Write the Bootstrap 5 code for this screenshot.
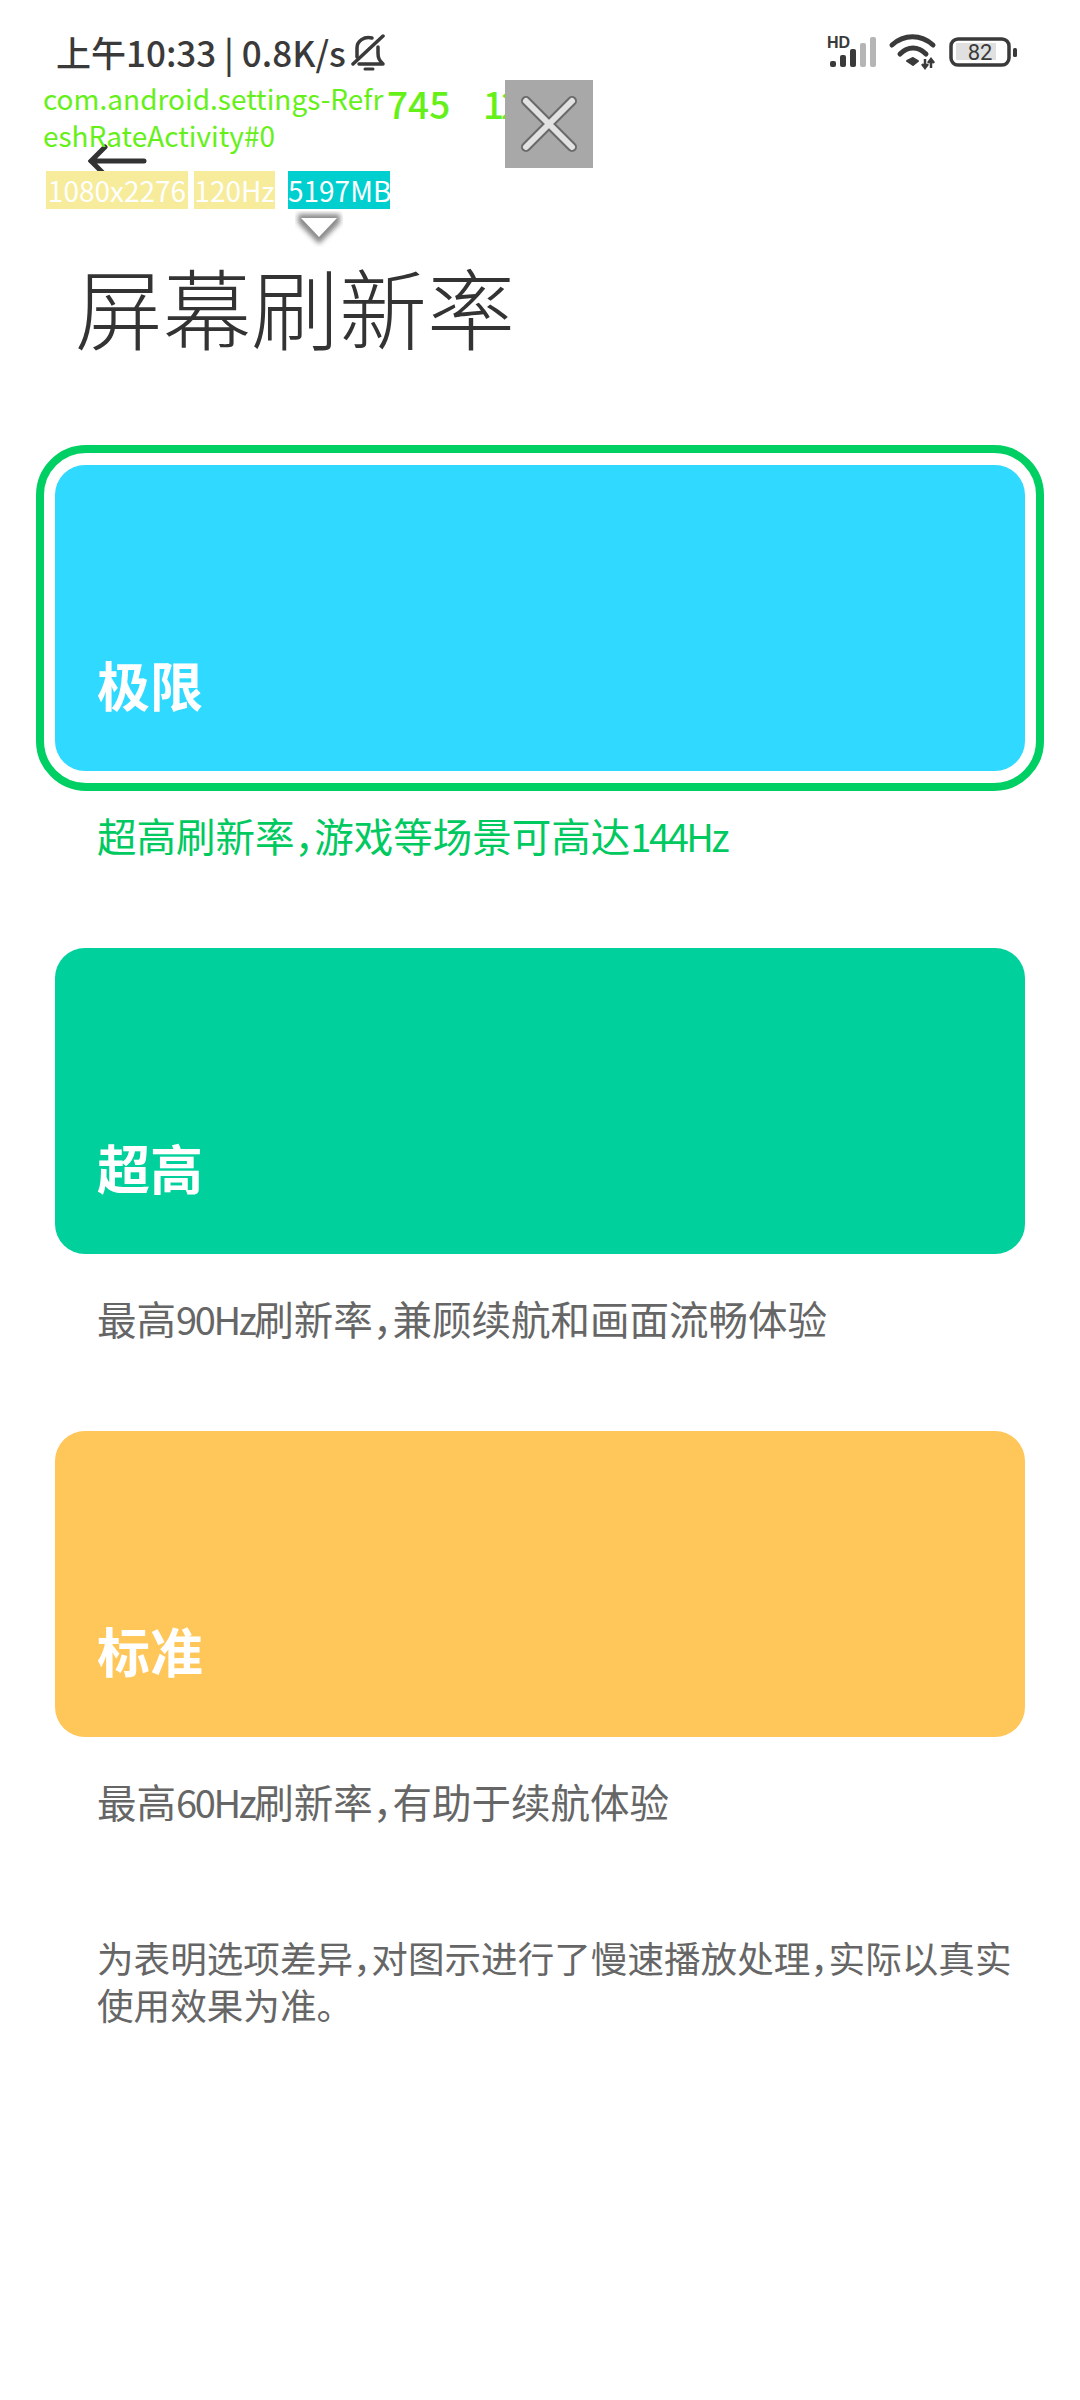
<!DOCTYPE html>
<html lang="zh-CN">
<head>
  <meta charset="UTF-8">
  <meta name="viewport" content="width=device-width, initial-scale=1.0">
  <title>屏幕刷新率</title>
  <link rel="stylesheet" href="https://cdn.jsdelivr.net/npm/bootstrap@5.3.0/dist/css/bootstrap.min.css">
  <style>
    body { width: 1080px; height: 2400px; background: #fff; font-family: "Noto Sans CJK SC", "Noto Sans", sans-serif; color: #333; position: relative; overflow: hidden; }
    .status-bar { height: 104px; padding: 26px 63px 0 56px; }
    .status-text { font-size: 35px; font-weight: 500; line-height: 52px; color: #3a3a3a; }
    .status-bell { margin: 8px 0 0 5px; }
    .status-icons { gap: 12px; height: 52px; }
    .status-icons svg { overflow: visible; }
    .back-row { height: 110px; padding: 3px 0 0 88px; }
    .page-title { font-size: 88px; font-weight: 300; line-height: 120px; margin: 31px 0 80px 75px; color: #333; }
    .rate-frame { margin: 0 36px; padding: 12px 11px; border: 8px solid transparent; border-radius: 50px; }
    .rate-frame-on { border-color: #00cf63; }
    .rate-tile { height: 306px; border-radius: 30px; padding: 0 42px 52px; color: #fff; font-size: 53px; font-weight: 700; line-height: 70px; }
    .tile-cyan { background: #2fd9ff; }
    .tile-green { background: #00d09c; }
    .tile-orange { background: #ffc65a; }
    .rate-desc { margin: 17px 0 0 97px; font-size: 39.5px; line-height: 54px; color: #666; height: 120px; white-space: nowrap; }
    .rate-desc-on { color: #00c95f; }
    .rate-note { margin: 40px 40px 0 97px; font-size: 36.6px; line-height: 47px; color: #666; }
    .narrow-comma { font-feature-settings: "halt"; }
    .tight-latin { font-size: 38px; letter-spacing: -2.4px; }
    .fps-overlay { position: absolute; left: 43px; top: 80px; width: 550px; height: 165px; color: #66f01a; }
    .fps-name { position: absolute; left: 0; top: 0; font-size: 28px; line-height: 37px; white-space: nowrap; }
    .fps-num { position: absolute; top: -1px; font-size: 37px; font-weight: 500; line-height: 48px; }
    .fps-num-cut { left: 440px; letter-spacing: -3px; }
    .fps-tag { position: absolute; top: 91px; height: 38px; line-height: 38px; color: #fff; font-size: 28px; text-align: center; white-space: nowrap; }
    .tag-yellow { background: #f6ec9c; }
    .tag-teal { background: #00cfd0; }
    .fps-close { position: absolute; left: 462px; top: 0; width: 88px; height: 88px; background: #a8a8a8; }
    .fps-handle { position: absolute; left: 252px; top: 131px; }
  </style>
</head>
<body>
  <div class="status-bar d-flex align-items-start">
    <span class="status-text">上午10:33 | 0.8K/s</span>
    <svg class="status-bell" width="34" height="38" viewBox="0 0 34 38" fill="none" stroke="#3a3a3a" stroke-width="3.5" stroke-linecap="round" stroke-linejoin="round">
      <path d="M6 23V14C6 7 13 2 21 4"/>
      <path d="M8 30H32C28 26 27 24 27 19V13"/>
      <path d="M2 30 32 2"/>
      <path d="M14 35H22" stroke-width="3"/>
    </svg>
    <div class="status-icons d-flex align-items-center ms-auto">
      <svg width="50" height="32" viewBox="0 0 50 32">
        <text x="0" y="12" font-family="Liberation Sans" font-size="16" font-weight="700" fill="#3a3a3a">HD</text>
        <g fill="#3a3a3a"><rect x="3" y="25" width="6" height="6" rx="2"/><rect x="13" y="19" width="6" height="12" rx="2"/><rect x="23" y="13" width="6" height="18" rx="2"/></g>
        <g fill="#b5b5b5"><rect x="33" y="7" width="6" height="24" rx="2"/><rect x="43" y="1" width="6" height="30" rx="2"/></g>
      </svg>
      <svg width="48" height="36" viewBox="0 0 48 36" fill="none" stroke="#3a3a3a" stroke-width="5" stroke-linecap="round">
        <path d="M3 11C15 0 32 0 44 11"/>
        <path d="M11 20C19 12 29 12 37 20"/>
        <path d="M18 27 24 24 29 27 24 31Z" fill="#3a3a3a" stroke-width="2" stroke-linejoin="round"/>
        <g stroke-width="2.5" stroke-linecap="butt">
          <path d="M36 25V34M33 30 36 34 39 30"/>
          <path d="M42 34V25M39 29 42 25 45 29"/>
        </g>
      </svg>
      <svg width="68" height="30" viewBox="0 0 68 30">
        <rect x="2" y="2" width="58" height="26" rx="7" fill="none" stroke="#3a3a3a" stroke-width="3.5"/>
        <rect x="7" y="6" width="40" height="17" fill="#e0e0e0"/>
        <text x="31" y="23" text-anchor="middle" font-family="Roboto" font-size="22" fill="#3a3a3a">82</text>
        <rect x="64" y="11" width="4" height="9" rx="1.5" fill="#3a3a3a"/>
      </svg>
    </div>
  </div>

  <div class="back-row d-flex align-items-center">
    <svg width="60" height="34" viewBox="0 0 60 34" fill="none" stroke="#333" stroke-width="5" stroke-linecap="round">
      <path d="M3 17H56M17 3 3 17 17 31"/>
    </svg>
  </div>

  <h1 class="page-title">屏幕刷新率</h1>

  <div class="rate-option">
    <div class="rate-frame rate-frame-on">
      <div class="rate-tile tile-cyan d-flex align-items-end">极限</div>
    </div>
    <p class="rate-desc rate-desc-on">超高刷新率<span class="narrow-comma">，</span>游戏等场景可高达<span class="tight-latin">144Hz</span></p>
  </div>
  <div class="rate-option">
    <div class="rate-frame">
      <div class="rate-tile tile-green d-flex align-items-end">超高</div>
    </div>
    <p class="rate-desc">最高<span class="tight-latin">90Hz</span>刷新率<span class="narrow-comma">，</span>兼顾续航和画面流畅体验</p>
  </div>
  <div class="rate-option">
    <div class="rate-frame">
      <div class="rate-tile tile-orange d-flex align-items-end">标准</div>
    </div>
    <p class="rate-desc">最高<span class="tight-latin">60Hz</span>刷新率<span class="narrow-comma">，</span>有助于续航体验</p>
  </div>
  <p class="rate-note">为表明选项差异<span class="narrow-comma">，</span>对图示进行了慢速播放处理<span class="narrow-comma">，</span>实际以真实使用效果为准。</p>

  <div class="fps-overlay">
    <div class="fps-name">com.android.settings-Refr<br>eshRateActivity#0</div>
    <span class="fps-num" style="left:344px">745</span>
    <span class="fps-num fps-num-cut">12</span>
    <span class="fps-tag tag-yellow" style="left:3px;width:142px">1080x2276</span>
    <span class="fps-tag tag-yellow" style="left:151px;width:81px">120Hz</span>
    <span class="fps-tag tag-teal" style="left:245px;width:102px">5197MB</span>
    <div class="fps-close">
      <svg width="88" height="88" viewBox="0 0 88 88" fill="none" stroke-linecap="round">
        <path d="M21 21 67 67M67 21 21 67" stroke="#6a6a6a" stroke-width="10"/>
        <path d="M21 21 67 67M67 21 21 67" stroke="#e2e2e2" stroke-width="6"/>
      </svg>
    </div>
    <svg class="fps-handle" width="48" height="36" viewBox="0 0 48 36">
      <defs><filter id="handleBlur" x="-20%" y="-20%" width="140%" height="140%"><feGaussianBlur stdDeviation="2.5"/></filter></defs>
      <path d="M3 3H45V12L24 33 3 12Z" fill="#8a8a8a" filter="url(#handleBlur)"/>
      <path d="M6 7H42L24 26Z" fill="#fff"/>
    </svg>
  </div>
  <script src="https://cdn.jsdelivr.net/npm/bootstrap@5.3.0/dist/js/bootstrap.bundle.min.js"></script>
</body>
</html>
